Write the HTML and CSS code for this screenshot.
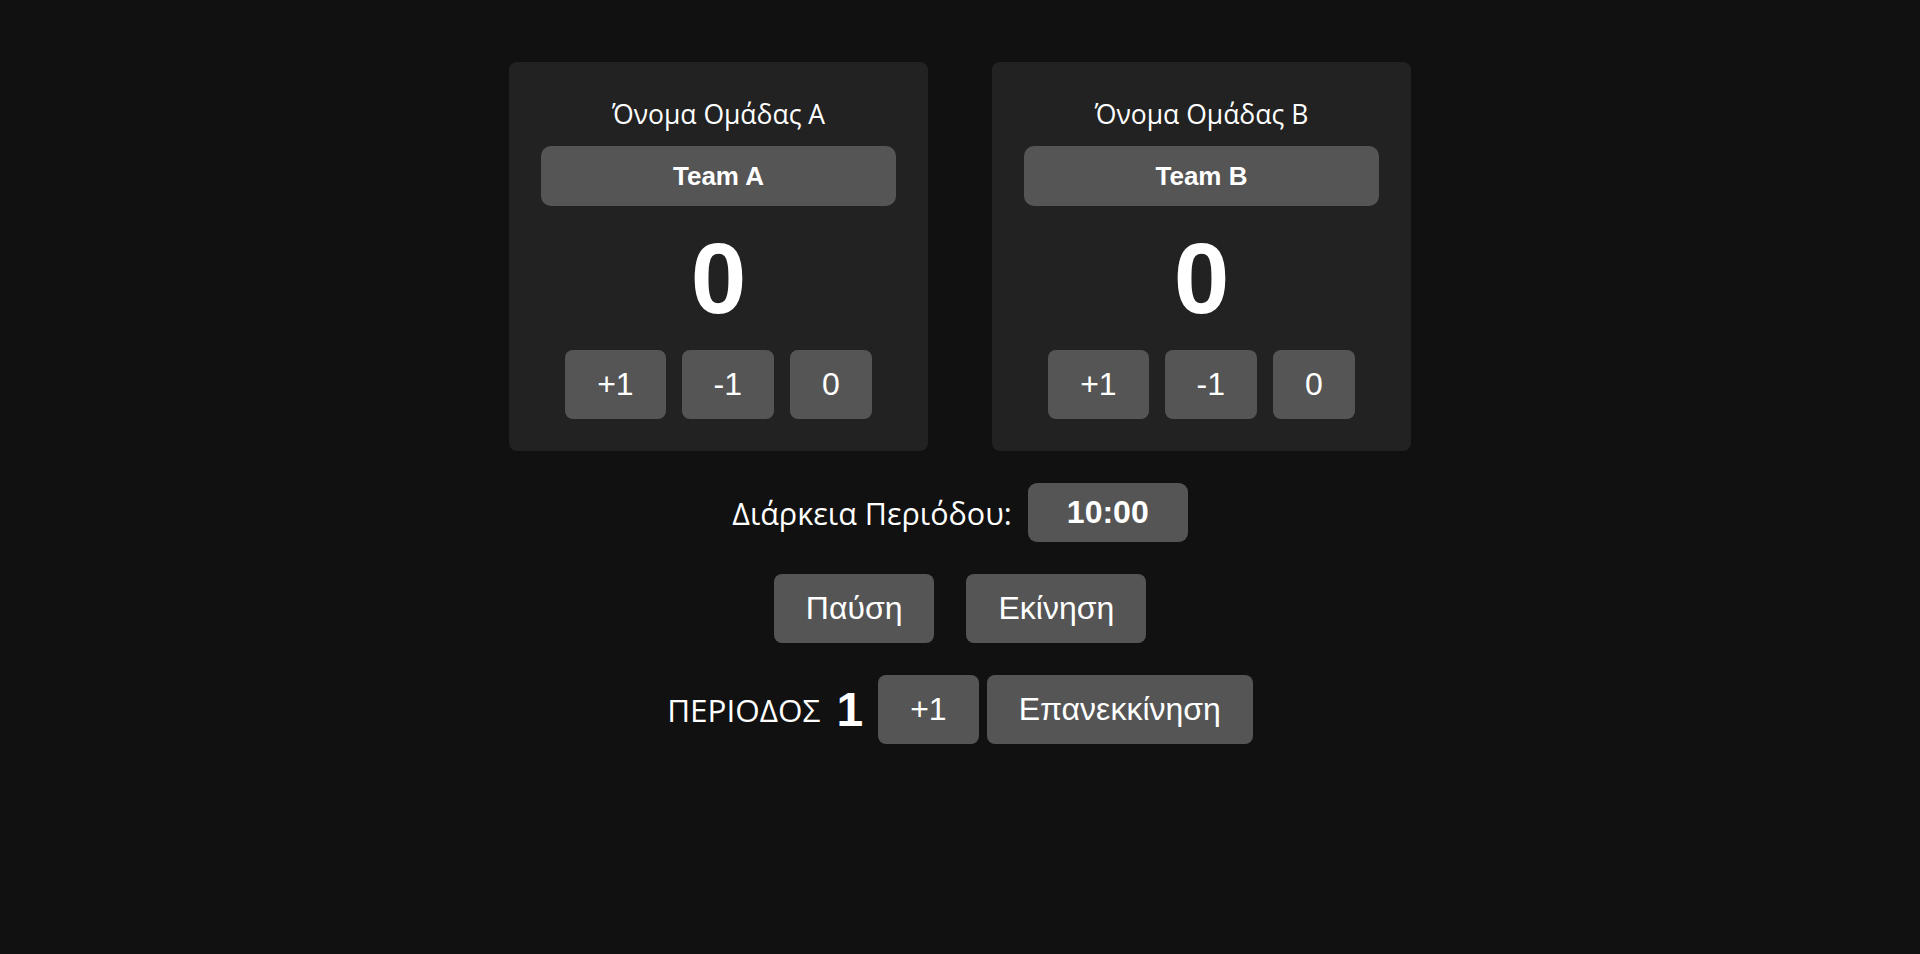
FILE: index.html
```html
<!DOCTYPE html>
<html lang="el">
<head>
<meta charset="utf-8">
<title>Scoreboard</title>
<link rel="stylesheet" href="styles.css">
</head>
<body>
<main class="board">
  <section class="teams">
    <div class="team-card">
      <label class="team-label" for="nameA">Όνομα Ομάδας A</label>
      <input class="team-name" id="nameA" value="Team A">
      <div class="score">0</div>
      <div class="score-controls">
        <button class="btn">+1</button>
        <button class="btn">-1</button>
        <button class="btn">0</button>
      </div>
    </div>
    <div class="team-card">
      <label class="team-label" for="nameB">Όνομα Ομάδας B</label>
      <input class="team-name" id="nameB" value="Team B">
      <div class="score">0</div>
      <div class="score-controls">
        <button class="btn">+1</button>
        <button class="btn">-1</button>
        <button class="btn">0</button>
      </div>
    </div>
  </section>
  <div class="duration-row">
    <label class="label" for="duration">Διάρκεια Περιόδου:</label>
    <input class="duration" id="duration" value="10:00">
  </div>
  <div class="timer-row">
    <button class="btn">Παύση</button>
    <button class="btn">Εκίνηση</button>
  </div>
  <div class="period-row">
    <span class="label period-label">ΠΕΡΙΟΔΟΣ</span>
    <span class="period-num">1</span>
    <button class="btn">+1</button>
    <button class="btn">Επανεκκίνηση</button>
  </div>
</main>
</body>
</html>
```

FILE: styles.css
```css
html, body {
  margin: 0;
  padding: 0;
  background: #111111;
  color: #ffffff;
  height: 100%;
}

.board {
  display: flex;
  flex-direction: column;
  align-items: center;
  padding-top: 62px;
  gap: 32px;
}

.teams {
  display: flex;
  gap: 64px;
}

.team-card {
  width: 355px;
  background: #222222;
  border-radius: 8px;
  padding: 32px;
  display: flex;
  flex-direction: column;
  align-items: stretch;
}

.team-label {
  font-family: "Open Sans", sans-serif;
  font-size: 26.5px;
  line-height: 40px;
  text-align: center;
  margin-bottom: 12px;
}

.team-name {
  height: 60px;
  box-sizing: border-box;
  border: none;
  border-radius: 10px;
  background: #555555;
  color: #ffffff;
  font-family: "Liberation Sans", Arial, sans-serif;
  font-weight: bold;
  font-size: 26px;
  text-align: center;
  padding: 0 10px;
  outline: none;
}

.score {
  font-family: "Liberation Sans", Arial, sans-serif;
  font-weight: bold;
  font-size: 100px;
  line-height: 144px;
  text-align: center;
}

.score-controls {
  display: flex;
  justify-content: center;
  gap: 16px;
}

.btn {
  font-family: "Liberation Sans", Arial, sans-serif;
  font-size: 32px;
  line-height: 37px;
  height: 69px;
  padding: 16px 32px;
  background: #555555;
  color: #ffffff;
  border: none;
  border-radius: 8px;
}

.duration-row {
  display: flex;
  align-items: center;
  gap: 16px;
}

.label {
  font-family: "Open Sans", sans-serif;
  font-size: 30.5px;
}

.duration {
  width: 160px;
  height: 59px;
  box-sizing: border-box;
  border: none;
  border-radius: 9px;
  background: #555555;
  color: #ffffff;
  font-family: "Liberation Sans", Arial, sans-serif;
  font-weight: bold;
  font-size: 32px;
  text-align: center;
  padding: 0;
  outline: none;
}

.timer-row {
  display: flex;
  gap: 32px;
}

.period-row {
  display: flex;
  align-items: center;
  gap: 8px;
}

.period-label {
  font-size: 31.5px;
  margin-right: 8px;
}

.period-num {
  font-family: "Liberation Sans", Arial, sans-serif;
  font-weight: bold;
  font-size: 48px;
  margin-right: 7px;
}
```
